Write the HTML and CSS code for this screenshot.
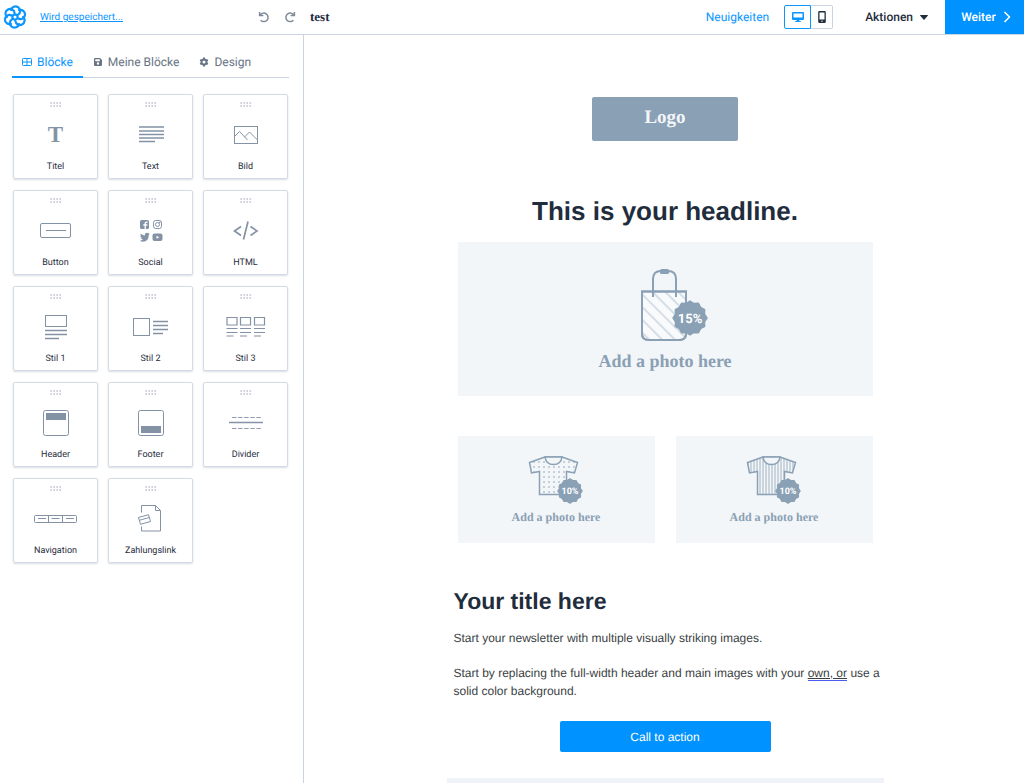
FILE: index.html
```html
<!DOCTYPE html>
<html lang="de">
<head>
  <meta charset="UTF-8">
  <meta name="viewport" content="width=device-width, initial-scale=1.0">
  <title>test</title>
  <link rel="stylesheet" href="styles.css">
</head>
<body>
  <svg class="defs" width="0" height="0" aria-hidden="true">
    <symbol id="grip" viewBox="0 0 12 5">
      <path d="M.5 1h2M3.5 1h2M6.5 1h2M9.5 1h2M.5 4h2M3.5 4h2M6.5 4h2M9.5 4h2" stroke="#8492a6" stroke-width="1.2" stroke-dasharray="1.3 9"/>
    </symbol>
    <symbol id="badge" viewBox="-18 -18 36 36">
      <path d="M17 0 14.5 3.9 14.7 8.5 10.6 10.6 8.5 14.7 3.9 14.5 0 17-3.9 14.5-8.5 14.7-10.6 10.6-14.7 8.5-14.5 3.9-17 0-14.5-3.9-14.7-8.5-10.6-10.6-8.5-14.7-3.9-14.5 0-17 3.9-14.5 8.5-14.7 10.6-10.6 14.7-8.5 14.5-3.9z" fill="#8aa0b4" stroke="#8aa0b4" stroke-width="1.4" stroke-linejoin="round"/>
    </symbol>
    <pattern id="stripes" width="9" height="9" patternUnits="userSpaceOnUse" patternTransform="rotate(-45)">
      <path d="M4 0v9" stroke="#a3b5c4" stroke-width=".8"/>
    </pattern>
    <pattern id="dots" width="5" height="5" x="1" y="1" patternUnits="userSpaceOnUse">
      <circle cx="2" cy="2" r=".8" fill="#8aa0b4"/>
    </pattern>
    <pattern id="lines" width="3" height="3" patternUnits="userSpaceOnUse">
      <path d="M1 0v3" stroke="#8aa0b4" stroke-width=".8"/>
    </pattern>
  </svg>

  <header class="topbar">
    <svg class="brand" width="24" height="24" viewBox="-12 -12 24 24" fill="none" stroke="#0b96ff" stroke-width="2.2" stroke-linecap="round">
      <path d="M-4-7A4.600 4.600 0 1 1 3.200-2.300Q1.500-1.200.8-2.600"/>
      <path d="M-4-7A4.600 4.600 0 1 1 3.200-2.300Q1.500-1.200.8-2.600" transform="rotate(60)"/>
      <path d="M-4-7A4.600 4.600 0 1 1 3.200-2.300Q1.500-1.200.8-2.600" transform="rotate(120)"/>
      <path d="M-4-7A4.600 4.600 0 1 1 3.200-2.300Q1.500-1.200.8-2.600" transform="rotate(180)"/>
      <path d="M-4-7A4.600 4.600 0 1 1 3.200-2.300Q1.500-1.200.8-2.600" transform="rotate(240)"/>
      <path d="M-4-7A4.600 4.600 0 1 1 3.200-2.300Q1.500-1.200.8-2.600" transform="rotate(300)"/>
    </svg>
    <a class="status" href="#">Wird gespeichert...</a>
    <div class="history">
      <button class="icon-btn" aria-label="Rückgängig">
        <svg width="12" height="12" viewBox="0 0 12 12" fill="none" stroke="#7f8b9b" stroke-width="1.5"><path d="M1.6 1v3.6h3.8M2 4.3a4.3 4.3 0 1 1 .6 4.9"/></svg>
      </button>
      <button class="icon-btn" aria-label="Wiederholen">
        <svg width="12" height="12" viewBox="0 0 12 12" fill="none" stroke="#7f8b9b" stroke-width="1.5"><path d="M10.4 1v3.6H6.6M10 4.3a4.3 4.3 0 1 0-.6 4.9"/></svg>
      </button>
    </div>
    <strong class="doc-name">test</strong>
    <a class="news" href="#">Neuigkeiten</a>
    <div class="devices">
      <button class="device active" aria-label="Desktop">
        <svg width="12" height="12" viewBox="0 0 12 12" fill="#0b96ff"><path d="M1 1h10a1 1 0 0 1 1 1v6a1 1 0 0 1-1 1H7.3l.3 1.2H9V11H3v-.8h1.4L4.7 9H1a1 1 0 0 1-1-1V2a1 1 0 0 1 1-1zm.5 1.500v4h9v-4z" fill-rule="evenodd"/></svg>
      </button>
      <button class="device" aria-label="Mobil">
        <svg width="8" height="12" viewBox="0 0 8 12" fill="#1f2d3d"><path d="M1.500 0h5A1.300 1.300 0 0 1 7.800 1.300v9.400A1.300 1.300 0 0 1 6.500 12h-5A1.300 1.300 0 0 1 .2 10.700V1.300A1.300 1.300 0 0 1 1.500 0zm0 1.500v7h5v-7zM4 9.500a.7.7 0 1 0 0 1.400.7.7 0 0 0 0-1.400z" fill-rule="evenodd"/></svg>
      </button>
    </div>
    <button class="actions">Aktionen
      <svg width="8" height="5" viewBox="0 0 8 5"><path d="M.5.5h7L4 4.500z" fill="#1f2d3d" stroke="#1f2d3d" stroke-linejoin="round"/></svg>
    </button>
    <button class="next">Weiter
      <svg width="8" height="12" viewBox="0 0 8 12" fill="none" stroke="#fff" stroke-width="1.500"><path d="M1.500 1l5 5-5 5"/></svg>
    </button>
  </header>

  <div class="editor">
    <aside class="sidebar">
      <nav class="tabs">
        <a class="tab active" href="#">
          <svg width="10" height="10" viewBox="0 0 10 10" fill="none" stroke="currentColor"><rect x=".5" y="1.500" width="9" height="7" rx=".8"/><path d="M5 1.500v7M.5 5h9"/></svg>
          Blöcke
        </a>
        <a class="tab" href="#">
          <svg width="10" height="10" viewBox="0 0 10 10" fill="currentColor"><path d="M2 1h5l2 2v5a1 1 0 0 1-1 1H2a1 1 0 0 1-1-1V2a1 1 0 0 1 1-1zm.3 1.200v2h4.500v-2zM5 5.300a1.200 1.200 0 1 0 0 2.400 1.200 1.200 0 0 0 0-2.400z" fill-rule="evenodd"/></svg>
          Meine Blöcke
        </a>
        <a class="tab" href="#">
          <svg width="10" height="10" viewBox="0 0 10 10"><circle cx="5" cy="5" r="2.500" fill="none" stroke="currentColor" stroke-width="2"/><path d="M5 .6v1.400M5 8v1.400M1.200 2.800l1.200.7M7.600 6.500l1.200.7M1.200 7.200l1.200-.7M7.600 3.500l1.200-.7" stroke="currentColor" stroke-width="2"/></svg>
          Design
        </a>
      </nav>

      <div class="blocks">
        <button class="block">
          <svg class="grip"><use href="#grip"/></svg>
          <span class="glyph">T</span>
          <span>Titel</span>
        </button>
        <button class="block">
          <svg class="grip"><use href="#grip"/></svg>
          <svg class="icon" viewBox="0 0 44 32" stroke-width="1.600"><path d="M10 8h25M10 12h25M10 15.500h25M10 19h25M10 22.500h16"/></svg>
          <span>Text</span>
        </button>
        <button class="block">
          <svg class="grip"><use href="#grip"/></svg>
          <svg class="icon" viewBox="0 0 44 32"><rect x="10.500" y="7.500" width="23" height="17"/><path d="M11 17l4.500-4.500 8 8.500M20.500 18l5-5 8 8"/></svg>
          <span>Bild</span>
        </button>
        <button class="block">
          <svg class="grip"><use href="#grip"/></svg>
          <svg class="icon" viewBox="0 0 44 32"><rect x="6.500" y="8.500" width="30" height="14" rx="1.500"/><path d="M12 15.500h20"/></svg>
          <span>Button</span>
        </button>
        <button class="block">
          <svg class="grip"><use href="#grip"/></svg>
          <svg class="icon" viewBox="0 0 44 32">
            <rect x="11" y="5" width="9" height="9" rx="1.500" fill="#8492a6" stroke="none"/>
            <path d="M16.200 14V8.400q0-1.500 2.500-1.200M14.300 10h4" stroke="#fff" stroke-width="1.300"/>
            <rect x="24.500" y="5.500" width="8" height="8" rx="2.200"/>
            <circle cx="28.500" cy="9.500" r="2"/><circle cx="30.800" cy="7.300" r=".4"/>
            <path d="M11 25.500q2 0 3-1-1.500-.2-2-1.400h.9q-1.500-.7-1.600-2.200l.9.300q-1.200-1.200-.5-2.800 1.800 2 4.100 2.100-.3-2.600 1.900-2.800 1 0 1.500.6l1.300-.5-.8 1.200 1.100-.3-1 1.100q0 6.700-6 6.900-1.700 0-2.800-1.200z" fill="#8492a6" stroke="none"/>
            <rect x="23.500" y="18.500" width="10" height="7.500" rx="2" fill="#8492a6" stroke="none"/>
            <path d="M27.500 20.700v3.100l2.800-1.550z" fill="#fff" stroke="none"/>
          </svg>
          <span>Social</span>
        </button>
        <button class="block">
          <svg class="grip"><use href="#grip"/></svg>
          <svg class="icon" viewBox="0 0 44 32" stroke-width="1.700"><path d="M17 11.500L10.500 16l6.500 4.500M26.500 11.500L33 16l-6.500 4.500M24 6.500l-4.500 18"/></svg>
          <span>HTML</span>
        </button>
        <button class="block">
          <svg class="grip"><use href="#grip"/></svg>
          <svg class="icon" viewBox="0 0 44 32"><rect x="11.500" y="4.500" width="21" height="11"/><path d="M11 19.500h22M11 23.500h22M11 27.500h14" stroke-width="1.300"/></svg>
          <span>Stil 1</span>
        </button>
        <button class="block">
          <svg class="grip"><use href="#grip"/></svg>
          <svg class="icon" viewBox="0 0 44 32"><rect x="4.500" y="7.500" width="16" height="17"/><path d="M24 10.500h15M24 14.500h15M24 18.500h15M24 22.500h10" stroke-width="1.300"/></svg>
          <span>Stil 2</span>
        </button>
        <button class="block">
          <svg class="grip"><use href="#grip"/></svg>
          <svg class="icon" viewBox="0 0 44 32"><path d="M3 6.500h10v7.500H3zM16.500 6.500h10v7.500h-10zM30.500 6.500h10v7.500h-10zM2.500 17.500h11M16 17.500h11M30 17.500h11M2.500 21.500h11M16 21.500h11M30 21.500h11M2.500 25h7M16 25h7M30 25h7" stroke-width="1.200"/></svg>
          <span>Stil 3</span>
        </button>
        <button class="block">
          <svg class="grip"><use href="#grip"/></svg>
          <svg class="icon" viewBox="0 0 44 32"><rect x="9.500" y="3.500" width="25" height="25" rx="2"/><path d="M12 6h20v7H12z" fill="#8492a6" stroke="none"/></svg>
          <span>Header</span>
        </button>
        <button class="block">
          <svg class="grip"><use href="#grip"/></svg>
          <svg class="icon" viewBox="0 0 44 32"><rect x="9.500" y="3.500" width="25" height="25" rx="2"/><path d="M12 19h20v7H12z" fill="#8492a6" stroke="none"/></svg>
          <span>Footer</span>
        </button>
        <button class="block">
          <svg class="grip"><use href="#grip"/></svg>
          <svg class="icon" viewBox="0 0 44 32"><path d="M5 15.500h34" stroke-width="1.500"/><path d="M8 10.500h29M8 21.500h29" stroke-dasharray="4.500 1.600" stroke-width=".9"/></svg>
          <span>Divider</span>
        </button>
        <button class="block">
          <svg class="grip"><use href="#grip"/></svg>
          <svg class="icon" viewBox="0 0 44 32"><rect x=".5" y="12.500" width="42" height="7" rx="1"/><path d="M14.500 12.500v7M28.500 12.500v7M4 15.500h8M17.500 15.500h8M32 15.500h8"/></svg>
          <span>Navigation</span>
        </button>
        <button class="block">
          <svg class="grip"><use href="#grip"/></svg>
          <svg class="icon" viewBox="0 0 44 32"><path d="M12.500 9.500v-7h14l5 5v20.500h-19V23.500M26.500 2.500v5h5"/><path d="M9.500 14.500l10-2.800 2 6.800-10 2.800zM10.300 17.300l10-2.800"/></svg>
          <span>Zahlungslink</span>
        </button>
      </div>
    </aside>

    <main class="canvas">
      <div class="email">
        <div class="logo">Logo</div>
        <h1>This is your headline.</h1>

        <figure class="photo">
          <svg width="88" height="78" viewBox="0 0 88 78" fill="none" stroke="#8aa0b4" stroke-width="2">
            <path d="M21 25.500h44V68q0 6-7 6H28q-7 0-7-6z" fill="#f8fafc"/>
            <path d="M21 25.500h44V68q0 6-7 6H28q-7 0-7-6z" fill="url(#stripes)"/>
            <path d="M32 31V13q0-8 8-8h7q8 0 8 8v18"/>
            <rect x="39" y="3" width="9" height="5" rx="1.500" fill="#8aa0b4" stroke="none"/>
            <use href="#badge" x="51" y="34" width="36" height="36"/>
            <text class="pct" x="69" y="57">15%</text>
          </svg>
          <figcaption>Add a photo here</figcaption>
        </figure>

        <div class="photo-row">
          <figure class="photo small">
            <svg width="60" height="52" viewBox="0 0 60 52" fill="none" stroke="#8aa0b4" stroke-width="1.500">
              <path d="M19 3L3.500 8.500 5.500 19l8-1.500V40.500h27V17.500l8 1.500L51.500 8.500 36 3z" fill="url(#dots)"/>
              <path d="M19 3q1 7.500 8.500 7.500T36 3z" fill="#f3f6f9"/>
              <use href="#badge" x="31" y="24" width="26" height="26"/>
              <text class="pct" x="44" y="40">10%</text>
            </svg>
            <figcaption>Add a photo here</figcaption>
          </figure>
          <figure class="photo small">
            <svg width="60" height="52" viewBox="0 0 60 52" fill="none" stroke="#8aa0b4" stroke-width="1.500">
              <path d="M19 3L3.500 8.500 5.500 19l8-1.500V40.500h27V17.500l8 1.500L51.500 8.500 36 3z" fill="url(#lines)"/>
              <path d="M19 3q1 7.500 8.500 7.500T36 3z" fill="#f3f6f9"/>
              <use href="#badge" x="31" y="24" width="26" height="26"/>
              <text class="pct" x="44" y="40">10%</text>
            </svg>
            <figcaption>Add a photo here</figcaption>
          </figure>
        </div>

        <div class="copy">
          <h2>Your title here</h2>
          <p>Start your newsletter with multiple visually striking images.</p>
          <p>Start by replacing the full-width header and main images with your <span class="hint">own, or</span> use a solid color background.</p>
        </div>
        <button class="cta">Call to action</button>
        <div class="band"></div>
      </div>
    </main>
  </div>
</body>
</html>
```
FILE: styles.css
```css
* {
  box-sizing: border-box;
}

body {
  margin: 0;
  height: 100vh;
  display: flex;
  flex-direction: column;
  font-family: Roboto, "Liberation Sans", sans-serif;
  font-size: 12px;
  color: #1f2d3d;
  background: #fff;
  text-rendering: geometricPrecision;
}

button {
  font: inherit;
  color: inherit;
  text-rendering: inherit;
  background: none;
  border: none;
  padding: 0;
  cursor: pointer;
}

a {
  color: #0b96ff;
  text-decoration: none;
}

.defs {
  position: absolute;
}

/* top bar */
.topbar {
  display: flex;
  align-items: center;
  height: 35px;
  flex: none;
  padding-left: 3px;
  border-bottom: 1px solid #c9d4e0;
}

.status {
  margin-left: 13px;
  width: 218px;
  font-size: 10px;
  text-decoration: underline;
}

.history {
  display: flex;
  gap: 14px;
}

.icon-btn {
  display: flex;
}

.doc-name {
  margin-left: 14px;
  font-family: "Liberation Serif", serif;
  font-size: 13px;
}

.news {
  margin-left: auto;
}

.devices {
  display: flex;
  margin-left: 15px;
}

.device {
  display: flex;
  align-items: center;
  justify-content: center;
  width: 22px;
  height: 24px;
  border: 1px solid #c9d4e0;
  border-left: none;
  border-radius: 0 2px 2px 0;
}

.device.active {
  width: 27px;
  border: 1px solid #0b96ff;
  border-radius: 2px 0 0 2px;
}

.actions {
  display: flex;
  align-items: center;
  gap: 7px;
  margin: 0 17px 0 32px;
  font-weight: 500;
}

.next {
  display: flex;
  align-items: center;
  justify-content: center;
  gap: 7px;
  width: 79px;
  height: 34px;
  padding-left: 3px;
  background: #0092ff;
  color: #fff;
  font-weight: 500;
}

.editor {
  flex: 1;
  display: flex;
  min-height: 0;
}

/* sidebar */
.sidebar {
  width: 304px;
  flex: none;
  padding: 11px 14px 0 12px;
  border-right: 1px solid #c9d4e0;
}

.tabs {
  display: flex;
  border-bottom: 1px solid #c9d4e0;
}

.tab {
  display: flex;
  align-items: center;
  gap: 5px;
  height: 32px;
  padding: 2px 10px 0;
  margin-bottom: -1px;
  color: #687484;
  border-bottom: 2px solid transparent;
}

.tab.active {
  color: #0b96ff;
  border-color: #0b96ff;
}

.blocks {
  display: grid;
  grid-template-columns: repeat(3, 1fr);
  gap: 11px 10px;
  padding: 16px 1px 0;
}

.block {
  display: flex;
  flex-direction: column;
  align-items: center;
  justify-content: space-between;
  height: 85px;
  padding: 7px 0 5px;
  border: 1px solid #d3dbe5;
  border-radius: 2px;
  box-shadow: 0 1px 2px rgba(60, 80, 110, 0.2);
  font-size: 9px;
  line-height: 11px;
}

.grip {
  width: 12px;
  height: 5px;
}

.icon {
  width: 44px;
  height: 32px;
  fill: none;
  stroke: #8492a6;
}

.glyph {
  font-family: "Liberation Serif", serif;
  font-size: 23px;
  font-weight: bold;
  line-height: 32px;
  color: #8492a6;
}

/* newsletter */
.canvas {
  flex: 1;
  padding-left: 2px;
  overflow-y: auto;
  scrollbar-width: none;
}

.email {
  display: flex;
  flex-direction: column;
  align-items: center;
  max-width: 437px;
  margin: 0 auto;
  padding-top: 62px;
  font-family: "Liberation Sans", Arial, sans-serif;
}

.logo {
  width: 146px;
  padding: 7px 0 9px;
  border-radius: 2px;
  background: #8aa0b4;
  color: #f3f6f9;
  font-family: "Liberation Serif", serif;
  font-size: 19px;
  font-weight: bold;
  line-height: 28px;
  text-align: center;
}

h1 {
  margin: 52px 0 13px;
  font-size: 26px;
  line-height: 36px;
}

.photo {
  display: flex;
  flex-direction: column;
  align-items: center;
  gap: 6px;
  width: 415px;
  max-width: 100%;
  margin: 0;
  padding: 24px 0 23px;
  background: #f3f6f9;
  color: #8aa0b4;
  font-family: "Liberation Serif", serif;
  font-size: 18px;
  font-weight: bold;
  line-height: 23px;
}

.photo-row {
  display: flex;
  gap: 21px;
  width: 415px;
  max-width: 100%;
  margin-top: 40px;
}

.photo.small {
  flex: 1;
  gap: 3px;
  padding: 18px 0;
  font-size: 12px;
  line-height: 16px;
}

.pct {
  font-family: Roboto, sans-serif;
  font-size: 13px;
  font-weight: bold;
  fill: #fff;
  stroke: none;
  text-anchor: middle;
}

.small .pct {
  font-size: 9px;
}

.copy {
  align-self: stretch;
  padding-left: 7px;
  color: #3b3f44;
  line-height: 18px;
}

h2 {
  margin: 43px 0 13px;
  font-size: 23px;
  line-height: 30px;
  color: #1f2d3d;
}

p {
  margin: 0 0 17px;
}

.hint {
  border-bottom: 1px solid #4b5cf0;
  text-decoration: underline;
}

.cta {
  width: 211px;
  height: 31px;
  margin-top: 4px;
  border-radius: 2px;
  background: #0092ff;
  color: #fff;
}

.band {
  align-self: stretch;
  height: 120px;
  margin-top: 26px;
  flex: none;
  background: #eff2f8;
}
```
